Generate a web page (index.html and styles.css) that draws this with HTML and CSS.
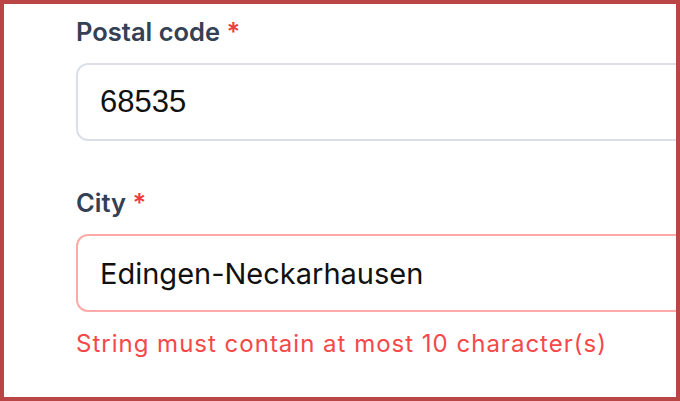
FILE: index.html
```html
<!DOCTYPE html>
<html lang="en">
<head>
<meta charset="utf-8">
<title>Address form</title>
<link rel="stylesheet" href="styles.css">
</head>
<body>
<div class="frame">
  <form class="form">
    <div class="field">
      <label class="label">Postal code <span class="req">*</span></label>
      <div class="input input-ok"><span class="value value-num">68535</span></div>
    </div>
    <div class="field field-city">
      <label class="label">City <span class="req">*</span></label>
      <div class="input input-err"><span class="value">Edingen-Neckarhausen</span></div>
      <p class="error">String must contain at most 10 character(s)</p>
    </div>
  </form>
</div>
</body>
</html>
```

FILE: styles.css
```css
html, body {
  margin: 0;
  padding: 0;
  background: #ffffff;
}
.frame {
  box-sizing: border-box;
  width: 680px;
  height: 401px;
  border: 4px solid #b94545;
  overflow: hidden;
  background: #ffffff;
}
.form {
  display: flex;
  flex-direction: column;
  gap: 46px;
  padding: 12px 0 0 72px;
  margin: 0;
}
.field {
  display: flex;
  flex-direction: column;
  gap: 15px;
}
.label {
  font-family: Inter, "Liberation Sans", sans-serif;
  font-weight: 600;
  font-size: 25.5px;
  line-height: 32px;
  color: #344054;
  white-space: nowrap;
}
.req {
  color: #ef3b3b;
}
.input {
  box-sizing: border-box;
  width: 700px;
  height: 78px;
  border-radius: 12px;
  display: flex;
  align-items: center;
  padding-left: 22px;
  background: #ffffff;
}
.input-ok {
  border: 2px solid #dcdfe8;
}
.input-err {
  border: 2px solid #fdaaa8;
}
.value {
  font-family: Inter, "Liberation Sans", sans-serif;
  font-size: 29px;
  color: #111111;
  white-space: nowrap;
}
.value-num {
  font-family: "Liberation Sans", Arial, sans-serif;
  font-size: 31px;
}
.error {
  margin: 0;
  margin-top: 2px;
  font-family: Inter, "Liberation Sans", sans-serif;
  font-size: 24px;
  letter-spacing: 1px;
  line-height: 30px;
  color: #f5484a;
  white-space: nowrap;
}
```
